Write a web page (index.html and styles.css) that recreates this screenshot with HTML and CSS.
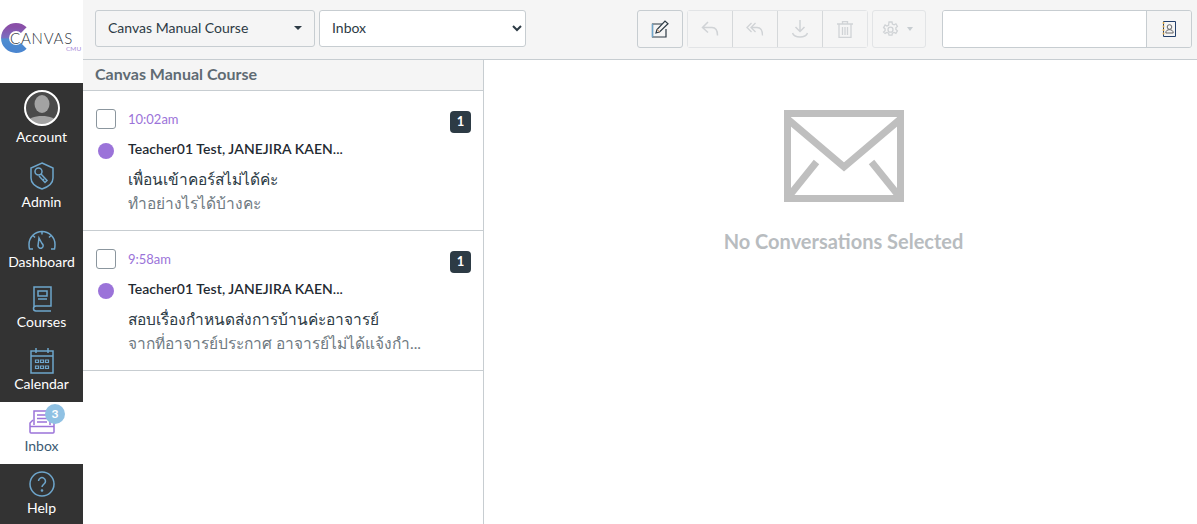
FILE: index.html
```html
<!DOCTYPE html>
<html lang="en">
<head>
<meta charset="utf-8">
<title>Inbox</title>
<link rel="stylesheet" href="styles.css">
</head>
<body>
<div class="app">
  <aside class="side">
    <div class="logo">
      <svg class="logo-mark" width="28" height="32" viewBox="0 0 28 32"><defs><linearGradient id="lg" x1="0" y1="0" x2="0" y2="1"><stop offset="0" stop-color="#8a4fa8"/><stop offset=".48" stop-color="#7a6fc0"/><stop offset=".55" stop-color="#4f8ed0"/><stop offset="1" stop-color="#4a86d0"/></linearGradient></defs><path d="M23.800 8.200A11 11 0 1 0 23.800 23.800" fill="none" stroke="url(#lg)" stroke-width="8"/></svg>
      <span class="logo-name">CANVAS</span>
      <span class="logo-sub">CMU</span>
    </div>
    <nav class="nav">
      <a class="nav-item h-account">
        <svg class="icon" width="38" height="38" viewBox="0 0 38 38"><defs><clipPath id="av"><circle cx="19" cy="19" r="17"/></clipPath></defs><circle cx="19" cy="19" r="17" fill="#4b4b4b"/><g clip-path="url(#av)" fill="#a3a3a3"><ellipse cx="19" cy="15" rx="7.500" ry="9"/><path d="M3 38c0-9 8-11 16-11s16 2 16 11z"/></g><circle cx="19" cy="19" r="17" fill="none" stroke="#fff" stroke-width="2"/></svg>
        <span>Account</span>
      </a>
      <a class="nav-item h-admin">
        <svg class="icon" width="24" height="28" viewBox="0 0 24 28" fill="none" stroke="#6ea6cc" stroke-width="1.500"><path d="M12 1l11 5v10c0 5-5 9-11 11C6 25 1 21 1 16V6z"/><circle cx="8.500" cy="9.500" r="3.500"/><path d="M11 12l6 6.500-2 2-6-6.500M14 17l-1.500 1.500"/></svg>
        <span>Admin</span>
      </a>
      <a class="nav-item h-dash">
        <svg class="icon" width="28" height="20" viewBox="0 0 28 20" fill="none" stroke="#6ea6cc" stroke-width="1.500"><path d="M5 19H1.500C1 17 1 15.500 1 14.500a13 13 0 0 1 26 0c0 1 0 2.500-.5 4.500H23"/><path d="M11 8l3 5.500a2.600 2.600 0 1 1-4 2.500zM14 1.500v3M5 5.500l2 2M23 5.500l-2 2"/></svg>
        <span>Dashboard</span>
      </a>
      <a class="nav-item h-courses">
        <svg class="icon" width="20" height="26" viewBox="0 0 20 26" fill="none" stroke="#6ea6cc" stroke-width="1.500"><path d="M2 21V1h17v19H4a2.500 2.500 0 0 0 0 5h15"/><path d="M6 5h9v5H6zM6 13h9"/></svg>
        <span>Courses</span>
      </a>
      <a class="nav-item h-calendar">
        <svg class="icon" width="24" height="27" viewBox="0 0 24 27" fill="none" stroke="#6ea6cc" stroke-width="1.500"><path d="M1 4h22v22H1zM1 9h22M6 1v5M18 1v5"/><path d="M5.500 13h3v2.500h-3zM10.500 13h3v2.500h-3zM15.500 13h3v2.500h-3zM5.500 19h3v2.500h-3zM10.500 19h3v2.500h-3zM15.500 19h3v2.500h-3z" stroke-width="1.200"/></svg>
        <span>Calendar</span>
      </a>
      <a class="nav-item h-inbox">
        <svg class="icon" width="26" height="24" viewBox="0 0 26 24" fill="none" stroke="#9b73d9" stroke-width="1.500"><path d="M5 15V1h16v14"/><path d="M8 5h10M8 8.500h10M8 12h10"/><path d="M4 10l-3 3v9a1 1 0 0 0 1 1h22a1 1 0 0 0 1-1v-9l-3-3M1 16.500h24"/></svg>
        <span>Inbox</span>
        <b class="nav-badge">3</b>
      </a>
      <a class="nav-item h-help">
        <svg class="icon" width="26" height="26" viewBox="0 0 26 26" fill="none" stroke="#6ea6cc" stroke-width="1.500"><circle cx="13" cy="13" r="12"/><path d="M9.500 10a3.500 3.500 0 1 1 5.500 3c-1.300 1-2 1.500-2 3"/><circle cx="13" cy="19.500" r=".6"/></svg>
        <span>Help</span>
      </a>
    </nav>
  </aside>
  <main class="main">
    <header class="toolbar">
      <div class="course-select"><span>Canvas Manual Course</span><i class="caret"></i></div>
      <select class="box-select"><option>Inbox</option></select>
      <div class="spacer"></div>
      <button class="tool compose" type="button">
        <svg width="18" height="18" viewBox="0 0 18 18" fill="none"><path d="M11 4H1.500v13H15V9" stroke="#2d3b45" stroke-width="1.200"/><path d="M1.500 4v13" stroke="#6ea6cc" stroke-width="1.400"/><path d="M5 13l1-3.500 8-8.500 3 2.700-8.500 8.300z" fill="#f5f5f5" stroke="#2d3b45" stroke-width="1.200"/><path d="M6 9.500l3 2.700" stroke="#c58a5a" stroke-width="1"/></svg>
      </button>
      <div class="tool-group">
        <button class="tool-seg" type="button"><svg width="18" height="16" viewBox="0 0 18 16" fill="none" stroke="#d0d3d6" stroke-width="1.500"><path d="M7 1L1.500 6.500 7 11.500M1.500 6.500H11c3.500 0 5.500 3 5.500 8"/></svg></button>
        <button class="tool-seg" type="button"><svg width="18" height="15" viewBox="0 0 18 15" fill="none" stroke="#d0d3d6" stroke-width="1.300"><path d="M5.500 1L1 5.500 5.500 10M9.500 1L5 5.500 9.500 10M5 5.500h6c3.500 0 5.500 3 5.500 8"/></svg></button>
        <button class="tool-seg" type="button"><svg width="16" height="18" viewBox="0 0 16 18" fill="none" stroke="#d0d3d6" stroke-width="1.500"><path d="M8 0v11M3.500 7L8 11.500 12.500 7M.5 13c1 3 4 4 7.500 4s6.500-1 7.500-4"/></svg></button>
        <button class="tool-seg" type="button"><svg width="16" height="17" viewBox="0 0 16 17" fill="none" stroke="#d0d3d6" stroke-width="1.300"><path d="M0 3h16M5.500 3V.7h5V3M2 3v13.300h12V3M5.500 6v8M8 6v8M10.500 6v8"/></svg></button>
      </div>
      <button class="tool gear" type="button">
        <svg width="17" height="17" viewBox="0 0 17 17" fill="none" stroke="#d0d3d6" stroke-width="1.300"><path d="M7 1h3l.4 2 1.700.8 1.800-1 1.500 2.600-1.500 1.300v1.800l1.500 1.300-1.500 2.600-1.800-1-1.700.8-.4 2H7l-.4-2-1.700-.8-1.800 1L1.600 11l1.500-1.300V7.900L1.600 6.600l1.500-2.600 1.800 1 1.700-.8z"/><circle cx="8.500" cy="8.700" r="2.500"/></svg>
        <i class="caret light"></i>
      </button>
      <div class="search">
        <input class="search-input" type="text" aria-label="Search">
        <button class="search-btn" type="button">
          <svg width="14" height="16" viewBox="0 0 14 16" fill="none"><path d="M1.500 .5h12v15h-12z" stroke="#24406b"/><path d="M1.500 1v14" stroke="#d9a441" stroke-dasharray="2 1.500" stroke-width="1.500"/><circle cx="7.500" cy="6" r="2.300" stroke="#666"/><path d="M3.800 12c0-2.500 1.700-3.300 3.700-3.300s3.700.8 3.700 3.300z" stroke="#666"/></svg>
        </button>
      </div>
    </header>
    <div class="panes">
      <section class="list">
        <h2 class="list-head">Canvas Manual Course</h2>
        <article class="msg first">
          <div class="msg-row row-top">
            <i class="check"></i><time class="time">10:02am</time><b class="count">1</b>
          </div>
          <div class="msg-row row-name">
            <i class="dot"></i><strong class="name">Teacher01 Test, JANEJIRA KAEN...</strong>
          </div>
          <p class="subject">เพื่อนเข้าคอร์สไม่ได้ค่ะ</p>
          <p class="preview">ทำอย่างไรได้บ้างคะ</p>
        </article>
        <article class="msg">
          <div class="msg-row row-top">
            <i class="check"></i><time class="time">9:58am</time><b class="count">1</b>
          </div>
          <div class="msg-row row-name">
            <i class="dot"></i><strong class="name">Teacher01 Test, JANEJIRA KAEN...</strong>
          </div>
          <p class="subject">สอบเรื่องกำหนดส่งการบ้านค่ะอาจารย์</p>
          <p class="preview">จากที่อาจารย์ประกาศ อาจารย์ไม่ได้แจ้งกำ...</p>
        </article>
      </section>
      <section class="detail">
        <svg class="envelope" width="120" height="92" viewBox="0 0 120 92" fill="none" stroke="#bfbfbf" stroke-width="7"><path d="M3.500 3.500h113v85H3.500z"/><path d="M3.500 9L60 57l56.500-48M3.500 88l29-36M116.500 88l-29-36"/></svg>
        <h1 class="empty">No Conversations Selected</h1>
      </section>
    </div>
  </main>
</div>
</body>
</html>
```
FILE: styles.css
```css
* { box-sizing: border-box; }
html, body { margin: 0; height: 100%; }
body { font-family: Lato, "Noto Sans", sans-serif; color: #2d3b45; overflow: hidden; }
.app { display: flex; height: 524px; }

.side { width: 83px; flex: none; display: flex; flex-direction: column; }
.logo { position: relative; height: 83px; background: #fff; }
.logo-mark { position: absolute; left: 0; top: 22px; }
.logo-name { position: absolute; left: 10px; top: 30px; font-size: 15px; font-weight: 300; letter-spacing: .8px; line-height: 16px; color: #2f3540; }
.logo-sub { position: absolute; left: 66px; top: 45px; font-size: 6.500px; line-height: 7px; color: #a78bd8; }

.nav { flex: 1; background: #333; display: flex; flex-direction: column; }
.nav-item { position: relative; display: flex; flex-direction: column; align-items: center; justify-content: flex-end; color: #fff; font-size: 14px; line-height: 20px; }
.nav-item span { display: block; }
.icon { display: block; flex: none; }
.h-account { height: 64px; }
.h-admin { height: 65px; }
.h-admin .icon { margin-bottom: 2px; }
.h-dash { height: 60px; }
.h-dash .icon { margin-bottom: 2px; }
.h-courses { height: 60px; }
.h-calendar { height: 70px; padding-bottom: 8px; }
.h-inbox { height: 62px; padding-bottom: 8px; background: #fff; color: #3b5a73; }
.h-inbox .icon { margin-bottom: 2px; }
.h-help { height: 60px; padding-bottom: 6px; }
.h-help .icon { margin-bottom: 1px; }
.nav-badge { position: absolute; left: 45px; top: 2px; width: 20px; height: 20px; border-radius: 50%; background: #8fc1e3; color: #fff; font-size: 12px; line-height: 20px; text-align: center; }

.main { flex: 1; min-width: 0; display: flex; flex-direction: column; }
.toolbar { height: 60px; flex: none; display: flex; align-items: flex-start; padding: 10px 5px 0 12px; background: #f5f5f5; border-bottom: 1px solid #c7cdd1; }
.course-select { width: 220px; height: 37px; display: flex; align-items: center; justify-content: space-between; padding: 0 12px 2px 12px; border: 1px solid #c7cdd1; border-radius: 3px; font-size: 14px; color: #2d3b45; }
.caret { display: block; width: 0; height: 0; border: 4px solid transparent; border-top-color: #2d3b45; border-bottom: 0; }
.caret.light { border-width: 4px 3.500px 0; border-top-color: #c7cdd1; }
.box-select { width: 207px; height: 37px; margin-left: 4px; padding: 0 8px 2px; border: 1px solid #c7cdd1; border-radius: 3px; background: #fff; font: 14px Lato, sans-serif; color: #2d3b45; }
.spacer { flex: 1; }
.tool, .tool-seg, .search-btn { display: flex; align-items: center; justify-content: center; background: #f5f5f5; padding: 0; }
.tool { height: 38px; border: 1px solid #c7cdd1; border-radius: 3px; }
.compose { width: 46px; }
.tool-group { display: flex; height: 38px; margin-left: 4px; border: 1px solid #e2e4e6; border-radius: 3px; }
.tool-seg { width: 45px; border: 0; border-left: 1px solid #d5d8da; }
.tool-seg:first-child { width: 44px; border-left: 0; }
.gear { width: 54px; margin-left: 4px; gap: 8px; padding-right: 4px; border-color: #e2e4e6; }
.search { display: flex; width: 250px; height: 38px; margin-left: 16px; border: 1px solid #c7cdd1; border-radius: 3px; overflow: hidden; }
.search-input { flex: 1; min-width: 0; border: 0; background: #fff; }
.search-btn { width: 45px; border: 0; border-left: 1px solid #c7cdd1; }

.panes { flex: 1; min-height: 0; display: flex; }
.list { width: 400px; flex: none; }
.list-head { margin: 0; height: 31px; padding-left: 12px; background: #f5f5f5; border-bottom: 1px solid #c7cdd1; font-size: 16px; line-height: 27px; font-weight: 700; color: #5f6b73; }
.msg { height: 140px; border-bottom: 1px solid #c7cdd1; padding-top: 18px; }
.msg-row { display: flex; align-items: center; }
.row-top { height: 22px; position: relative; padding-left: 13px; }
.check { width: 20px; height: 20px; border: 1px solid #8b969e; border-radius: 3px; background: #fff; flex: none; margin-top: -2px; }
.time { margin-left: 12px; font-size: 13px; color: #9b73d9; margin-top: -2px; }
.count { position: absolute; left: 367px; top: 2px; width: 21px; height: 22px; border-radius: 4px; background: #2d3b45; color: #fff; font-size: 13px; line-height: 21px; text-align: center; }
.row-name { height: 22px; margin-top: 6px; padding-left: 15px; }
.dot { width: 16px; height: 16px; border-radius: 50%; background: #9b73d9; flex: none; margin-top: 5px; }
.name { margin-left: 14px; font-size: 14px; font-weight: 600; letter-spacing: .07px; color: #1f2a32; }
.subject { margin: 9px 0 0 45px; font-size: 15.500px; line-height: 22px; color: #2d3b45; }
.preview { margin: 2px 0 0 45px; font-size: 15.500px; line-height: 22px; color: #6f7a82; }
.detail { flex: 1; min-width: 0; border-left: 1px solid #c7cdd1; display: flex; flex-direction: column; align-items: center; padding: 50px 0 0 6px; }
.envelope { display: block; }
.empty { margin: 26px 0 0; font-size: 20px; line-height: 26px; font-weight: 700; color: #b8bcbf; }
```
